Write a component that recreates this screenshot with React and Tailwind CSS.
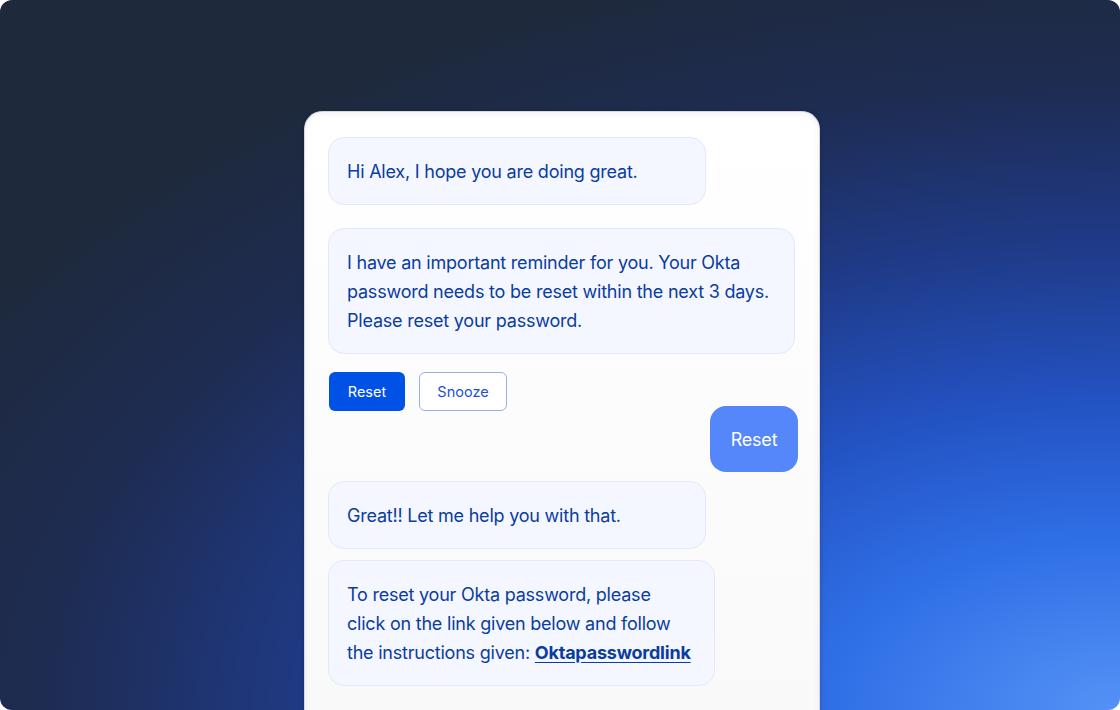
import React from "react";

function BotBubble({ children, className = "" }) {
  return (
    <div
      className={`rounded-[16px] border border-[#e1e9fb] bg-[#f4f7ff] px-[18px] py-[18.5px] text-[18px] leading-[29px] tracking-[-0.012em] text-[#0b3c9f] ${className}`}
    >
      {children}
    </div>
  );
}

export default function App() {
  return (
    <div className="bg-white w-[1120px] h-[710px]">
      <div
        className="w-[1120px] h-[710px] rounded-[12px] overflow-hidden flex justify-center pl-[4px] pt-[111px] bg-[radial-gradient(ellipse_120%_110%_at_100%_100%,#5592f6_0%,#2f6fe6_22%,#2352c2_40%,#1f3a86_60%,#1e2c52_80%,#1e293b_100%)]"
        style={{ fontFamily: "Inter, 'Noto Sans', sans-serif" }}
      >
        <div className="w-[516px] h-[620px] shrink-0 rounded-t-[18px] border border-[#d4d8df] bg-gradient-to-b from-white to-[#f9f9fa] shadow-[inset_0_2px_6px_rgba(0,0,0,0.06),0_1px_4px_rgba(0,0,0,0.25)] px-[23px] pt-[25px] flex flex-col">
          <BotBubble className="w-[378px]">Hi Alex, I hope you are doing great.</BotBubble>

          <BotBubble className="w-[467px] mt-[23px]">
            I have an important reminder for you. Your Okta password needs to be reset within the next 3 days. Please reset your password.
          </BotBubble>

          <div className="flex gap-[14px] mt-[18px] pl-[1px]">
            <button className="w-[76px] h-[39px] rounded-[6px] bg-[#0051e6] text-white text-[14.5px]">
              Reset
            </button>
            <button className="w-[88px] h-[39px] rounded-[6px] border border-[#97b0ec] bg-white text-[#1d4fd6] text-[14.5px]">
              Snooze
            </button>
          </div>

          <div className="flex justify-end -mt-[5px]">
            <div className="w-[88px] h-[66px] rounded-[16px] bg-[#5586fa] text-white text-[18px] tracking-[-0.012em] flex items-center justify-center mr-[-2px]">
              Reset
            </div>
          </div>

          <BotBubble className="w-[378px] mt-[9px]">Great!! Let me help you with that.</BotBubble>

          <BotBubble className="w-[387px] mt-[11px] whitespace-nowrap">
            To reset your Okta password, please
            <br />
            click on the link given below and follow
            <br />
            the instructions given:{" "}
            <a className="font-bold underline underline-offset-[3px]" href="#">
              Oktapasswordlink
            </a>
          </BotBubble>
        </div>
      </div>
    </div>
  );
}
